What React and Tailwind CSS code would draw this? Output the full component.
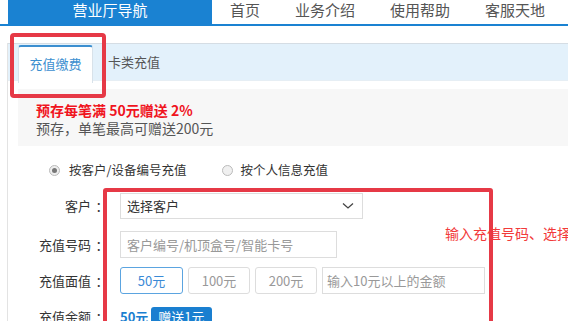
import React from "react";

const F = { fontFamily: '"Noto Sans CJK SC", "Microsoft YaHei", "Liberation Sans", sans-serif' };

function Label({ children }) {
  return (
    <div className="w-[101px] shrink-0 flex justify-end text-[13px] leading-[16px] text-[#333]">
      <span>{children}</span>
      <span className="inline-block ml-[4px] w-[14px] text-center">：</span>
    </div>
  );
}

export default function App() {
  return (
    <div className="relative w-[568px] h-[321px] overflow-hidden bg-white" style={F}>
      {/* header */}
      <div className="flex h-[26px] border-b-2 border-[#1a82d2] pl-[8px]">
        <div className="w-[204px] h-[24px] bg-[#1a82d2] text-white text-[15px] leading-[19px] flex justify-center">
          营业厅导航
        </div>
        <div className="flex gap-[35px] pl-[18px] text-[15px] leading-[19px] text-[#555]">
          <span>首页</span>
          <span>业务介绍</span>
          <span>使用帮助</span>
          <span>客服天地</span>
        </div>
      </div>

      {/* content */}
      <div className="ml-[7px] mt-[17px] border-l border-[#e3e3e3] h-[300px]">
        {/* tabs */}
        <div className="flex h-[38px] bg-[#e3f1fb] border-t border-[#d5dde4] border-b border-b-[#e6eef4]">
          <div className="ml-[10px] mt-[1px] w-[75px] h-[38px] bg-white border-t-2 border-[#3c8fd0] rounded-t-[3px] border-x border-x-[#d8e2ea] flex items-center justify-center pb-[2px] text-[13px] text-[#3c8fd0]">
            充值缴费
          </div>
          <div className="ml-[15px] flex items-center text-[13px] text-[#555]">卡类充值</div>
        </div>

        {/* promo */}
        <div className="ml-[10px] mt-[8px] h-[57px] bg-[#f7f7f7] pl-[18px] pt-[12px]">
          <div className="text-[14px] leading-[18px] font-bold text-[#f0141e]">预存每笔满 50元赠送 2%</div>
          <div className="text-[14px] leading-[18px] text-[#555]">预存，单笔最高可赠送200元</div>
        </div>

        {/* radios */}
        <div className="flex items-center h-[22px] mt-[13px] pl-[41px] text-[12.5px] text-[#333]">
          <span className="w-[11px] h-[11px] rounded-full border border-[#bbb] bg-[#eee] flex items-center justify-center">
            <span className="w-[5px] h-[5px] rounded-full bg-[#777]" />
          </span>
          <span className="ml-[9px]">按客户/设备编号充值</span>
          <span className="ml-[36px] w-[11px] h-[11px] rounded-full border border-[#bbb] bg-[#f0f0f0]" />
          <span className="ml-[7px]">按个人信息充值</span>
        </div>

        {/* form */}
        <div className="mt-[12px] flex flex-col">
          <div className="flex items-center h-[26px]">
            <Label>客户</Label>
            <div className="ml-[11px] w-[243px] h-[26px] border border-[#ddd] flex items-center justify-between pl-[6px] pr-[8px] text-[13px] text-[#333]">
              <span>选择客户</span>
              <svg width="12" height="8" viewBox="0 0 12 8" fill="none">
                <path d="M1 1.5 L6 6 L11 1.5" stroke="#444" strokeWidth="1.3" />
              </svg>
            </div>
          </div>
          <div className="flex items-center h-[27px] mt-[12px]">
            <Label>充值号码</Label>
            <div className="ml-[11px] w-[217px] h-[27px] border border-[#ddd] flex items-center pl-[6px] text-[13px] text-[#999]">
              客户编号/机顶盒号/智能卡号
            </div>
          </div>
          <div className="flex items-center h-[27px] mt-[9px]">
            <Label>充值面值</Label>
            <div className="ml-[11px] flex gap-[5px]">
              <div className="w-[63px] h-[27px] border border-[#5ba4e0] rounded-[3px] flex items-center justify-center text-[13px] text-[#3a8ad6]">50元</div>
              <div className="w-[62px] h-[27px] border border-[#ddd] rounded-[3px] flex items-center justify-center text-[13px] text-[#999]">100元</div>
              <div className="w-[62px] h-[27px] border border-[#ddd] rounded-[3px] flex items-center justify-center text-[13px] text-[#999]">200元</div>
              <div className="w-[163px] h-[27px] border border-[#ddd] flex items-center pl-[4px] text-[13px] text-[#999]">输入10元以上的金额</div>
            </div>
          </div>
          <div className="flex items-center h-[20px] mt-[13px]">
            <Label>充值余额</Label>
            <div className="ml-[11px] flex items-center">
              <span className="text-[13px] font-bold text-[#1a7fd0]">50元</span>
              <span className="ml-[3px] px-[7px] h-[20px] rounded-[3px] bg-[#1a7fd0] text-white text-[13px] leading-[20px]">赠送1元</span>
            </div>
          </div>
        </div>
      </div>

      {/* annotations */}
      <div className="absolute left-[10px] top-[33px] w-[96px] h-[65px] border-4 border-[#e63946] rounded-[4px]" />
      <div className="absolute left-[103px] top-[188px] w-[390px] h-[200px] border-4 border-[#e63946] rounded-[3px]" />
      <div className="absolute left-[445px] top-[223px] whitespace-nowrap text-[14px] leading-[20px] text-[#f23a3a]">
        输入充值号码、选择充值面值
      </div>
    </div>
  );
}
